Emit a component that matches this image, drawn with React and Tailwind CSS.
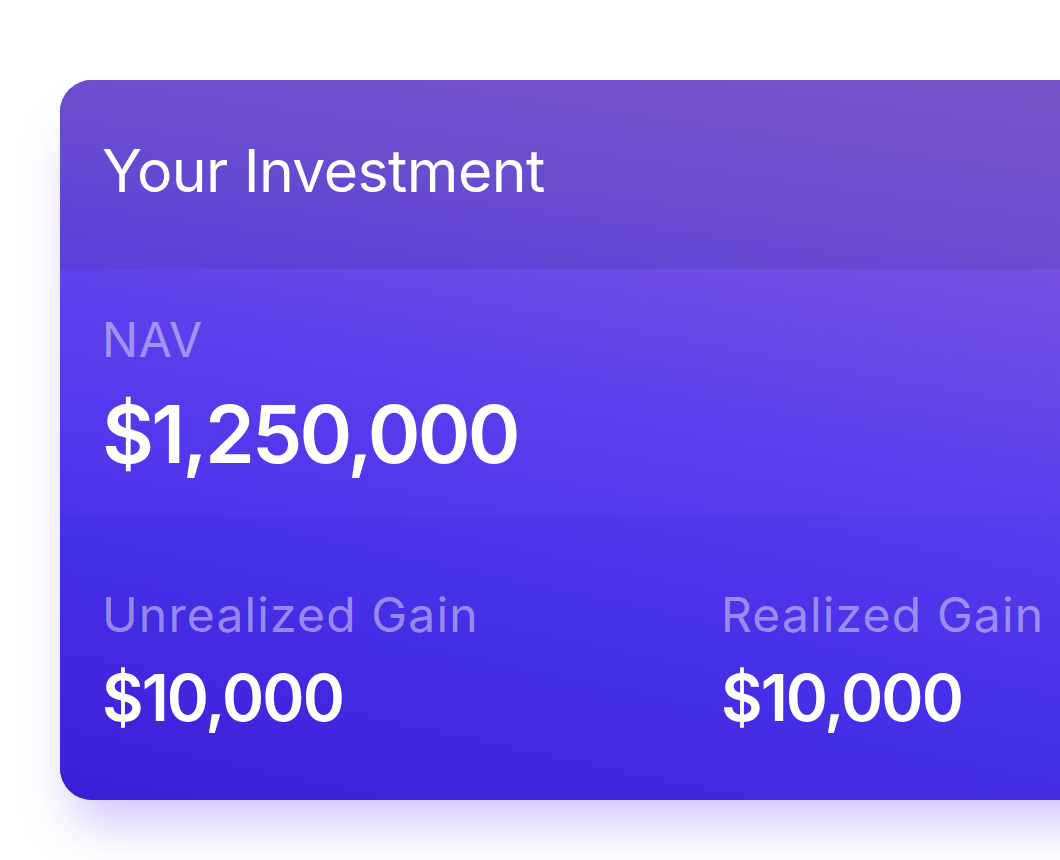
export default function App() {
  return (
    <div className="w-[1060px] h-[860px] overflow-hidden bg-white" style={{ fontFamily: 'Inter, "Noto Sans", sans-serif' }}>
      <div className="pt-[80px] pl-[60px]">
        <div className="w-[1326px] h-[720px] rounded-[32px] overflow-hidden flex flex-col shadow-[0_36px_50px_-14px_rgba(120,80,240,0.35)] bg-[linear-gradient(to_top_right,#3a20d8,#5238ec_55%,#7c58dc)]">
          <div className="h-[189px] pl-[42px] pt-[61px] bg-[linear-gradient(to_top_right,#5a3ed8,#6a4cd0_40%,#7b58c8)]">
            <h1 className="text-[59px] leading-none font-normal text-white tracking-[-0.01em]">Your Investment</h1>
          </div>
          <div className="h-[247px] pl-[42px] pt-[47px] bg-[linear-gradient(to_top_right,#4a33ec,#5d40ec_45%,#7b56dc)]">
            <div className="text-[48px] leading-none font-normal text-white/45 tracking-[0.01em]">NAV</div>
            <div className="mt-[30px] text-[80px] leading-none font-semibold text-white tracking-[-0.035em]">$1,250,000</div>
          </div>
          <div className="flex-1 border-t border-white/10 grid grid-cols-2 pl-[42px] pr-[46px] pt-[74px] bg-[linear-gradient(to_top_right,#3820d8,#4630e8_50%,#5a40ee)]">
            <div>
              <div className="text-[48px] leading-none font-normal text-white/45 tracking-[0.024em]">Unrealized Gain</div>
              <div className="mt-[27px] text-[64px] leading-none font-semibold text-white tracking-[-0.03em]">$10,000</div>
            </div>
            <div>
              <div className="text-[48px] leading-none font-normal text-white/45 tracking-[0.024em]">Realized Gain</div>
              <div className="mt-[27px] text-[64px] leading-none font-semibold text-white tracking-[-0.03em]">$10,000</div>
            </div>
          </div>
        </div>
      </div>
    </div>
  );
}
